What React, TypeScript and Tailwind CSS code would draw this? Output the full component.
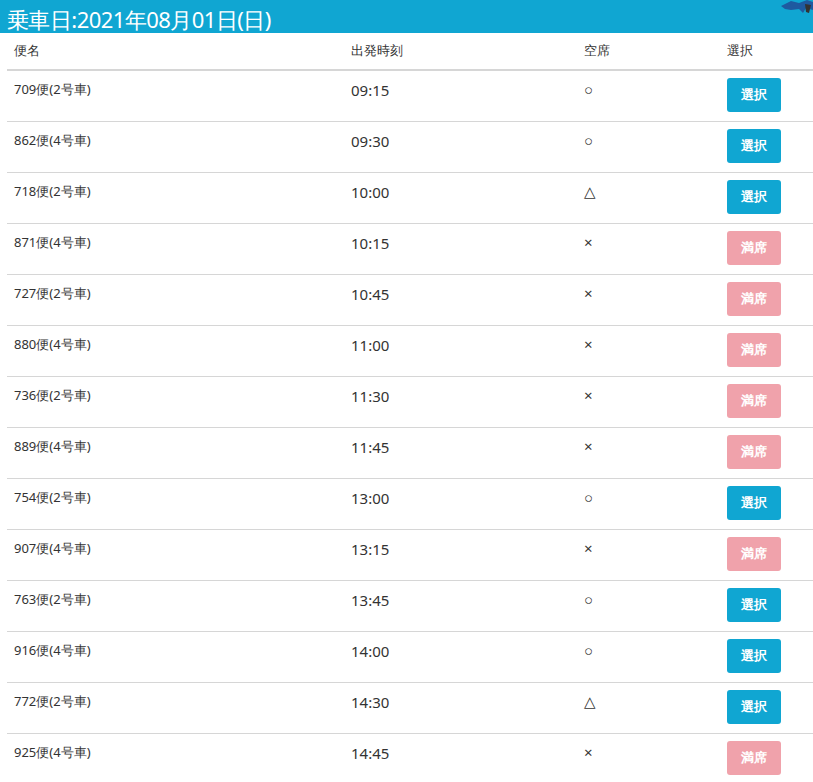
const rows: [string, string, string, boolean][] = [
  ["709便(2号車)", "09:15", "○", true],
  ["862便(4号車)", "09:30", "○", true],
  ["718便(2号車)", "10:00", "△", true],
  ["871便(4号車)", "10:15", "×", false],
  ["727便(2号車)", "10:45", "×", false],
  ["880便(4号車)", "11:00", "×", false],
  ["736便(2号車)", "11:30", "×", false],
  ["889便(4号車)", "11:45", "×", false],
  ["754便(2号車)", "13:00", "○", true],
  ["907便(4号車)", "13:15", "×", false],
  ["763便(2号車)", "13:45", "○", true],
  ["916便(4号車)", "14:00", "○", true],
  ["772便(2号車)", "14:30", "△", true],
  ["925便(4号車)", "14:45", "×", false],
];

export default function App() {
  return (
    <div className="w-[813px] h-[782px] overflow-hidden bg-white text-[#333] font-['Roboto','Noto_Sans_CJK_JP',sans-serif]">
      <div className="relative h-[33px] bg-[#10a6d2] flex items-end pl-[7px] pb-[3px]">
        <span className="text-white text-[22px] leading-none tracking-tight">乗車日:2021年08月01日(日)</span>
        <svg className="absolute right-0 top-0" width="34" height="14" viewBox="0 0 34 14">
          <path d="M2 6 L12 1 L20 3 L28 0 L34 2 L34 10 L27 8 L24 13 L20 9 L12 10 L6 9 Z" fill="#1e5aa0" />
          <path d="M26 4 L32 5 L30 13 L27 12 Z" fill="#333" />
        </svg>
      </div>
      <div className="pl-[7px]">
        <div className="flex h-[38px] items-center text-[13px] font-medium border-b-2 border-[#d6d6d6]">
          <div className="w-[337px] pl-[7px]">便名</div>
          <div className="w-[233px] pl-[7px]">出発時刻</div>
          <div className="w-[143px] pl-[7px]">空席</div>
          <div className="pl-[7px]">選択</div>
        </div>
        {rows.map(([name, time, seat, ok]) => (
          <div key={name} className="flex h-[51px] border-b border-[#d6d6d6] text-[14px]">
            <div className="w-[337px] pl-[7px] pt-[9px] text-[13px]">{name}</div>
            <div className="w-[233px] pl-[7px] pt-[8px] text-[15px]">{time}</div>
            <div className="w-[143px] pl-[7px] pt-[7px] text-[15px]">{seat}</div>
            <div className="pl-[7px] pt-[7px]">
              <button
                className={`w-[54px] h-[34px] rounded-[3px] text-white text-[13px] font-bold ${ok ? "bg-[#10a6d2]" : "bg-[#f0a2ab]"}`}
              >
                {ok ? "選択" : "満席"}
              </button>
            </div>
          </div>
        ))}
      </div>
    </div>
  );
}
